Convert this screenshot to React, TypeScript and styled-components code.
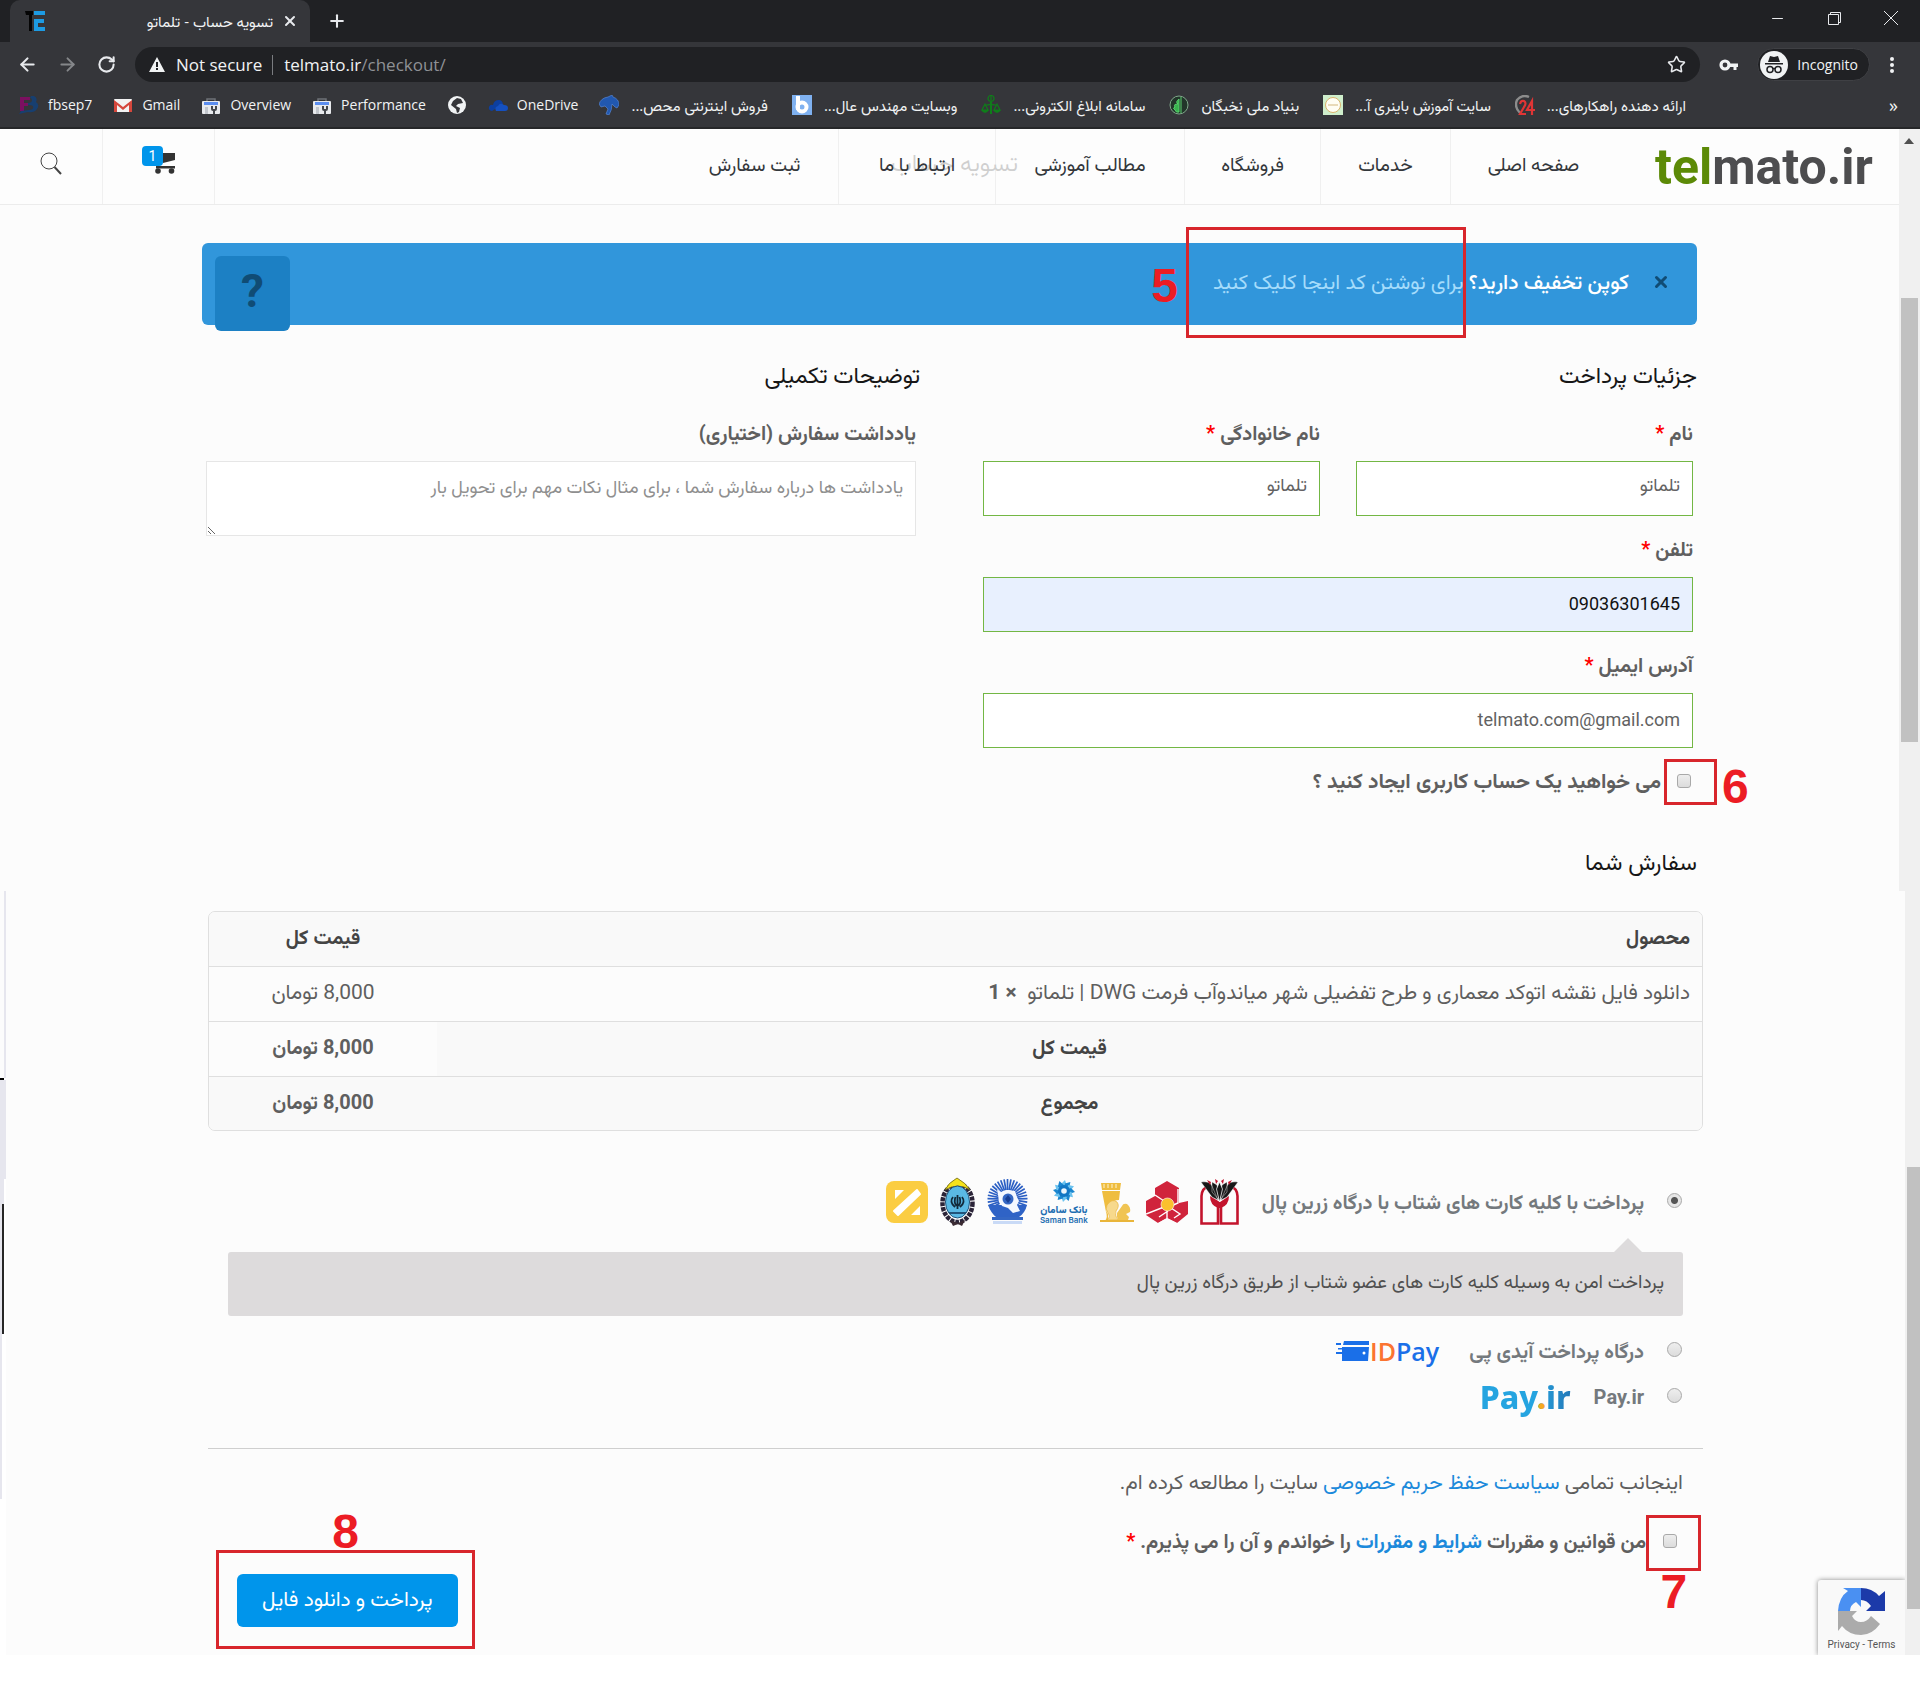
import React from "react";
import styled, { createGlobalStyle, css } from "styled-components";
import { ArrowLeft, ArrowRight, RotateCw, Star, X, Plus, Minus } from "lucide-react";

const faFont = `Roboto, Vazirmatn, "Noto Sans Arabic", "DejaVu Sans", sans-serif`;
const uiFont = `"Open Sans", Vazirmatn, "Noto Sans Arabic", "DejaVu Sans", sans-serif`;

const Global = createGlobalStyle`
  * { box-sizing: border-box; }
  body { margin: 0; background: #fff; }
  button, input, textarea { font: inherit; }
  a { text-decoration: none; color: inherit; }
`;

/* ---------- browser frame ---------- */

const Chrome = styled.header`
  background: #35363a;
  color: #f1f3f4;
  font-family: ${uiFont};
  border-bottom: 2px solid #262729;
`;
const TabStrip = styled.div`
  display: flex;
  align-items: center;
  height: 42px;
  padding: 0 21px 0 10px;
  background: #202124;
`;
const Tab = styled.div`
  display: flex;
  align-items: center;
  justify-content: space-between;
  align-self: stretch;
  width: 300px;
  padding: 0 12px 0 15px;
  background: #35363a;
  border-radius: 10px 10px 0 0;
  font-size: 15px;
  line-height: 22px;
`;
const TabTitle = styled.span`
  display: flex;
  align-items: center;
  gap: 9px;
`;
const IconButton = styled.button<{ $dim?: boolean }>`
  display: grid;
  place-items: center;
  padding: 0;
  border: 0;
  background: none;
  color: ${(p) => (p.$dim ? "#85878a" : "#e8eaed")};
`;
const NewTab = styled(IconButton)`
  margin-left: 17px;
`;
const WindowButtons = styled.div`
  display: flex;
  gap: 41px;
  margin-left: auto;
  padding-bottom: 6px;
`;
const Toolbar = styled.div`
  display: flex;
  align-items: center;
  gap: 19px;
  height: 45px;
  padding: 0 25px 0 17px;
`;
const Address = styled.div`
  display: flex;
  align-items: center;
  flex: 1;
  height: 35px;
  padding: 0 14px;
  border-radius: 18px;
  background: #202124;
  font-size: 17px;
  line-height: 24px;
`;
const Secure = styled.span`
  margin-left: 11px;
  padding-right: 10px;
  border-right: 1px solid #7a7c80;
  line-height: 20px;
`;
const Url = styled.span`
  flex: 1;
  margin-left: 11px;
`;
const Path = styled.span`
  color: #8f9195;
`;
const Profile = styled.button`
  display: flex;
  align-items: center;
  gap: 9px;
  height: 33px;
  padding: 0 11px 0 2px;
  border: 1px solid #3f4044;
  border-radius: 17px;
  background: #202124;
  color: #f1f3f4;
  font-size: 14px;
`;
const Bookmarks = styled.nav`
  display: flex;
  align-items: center;
  gap: 21px;
  height: 40px;
  padding: 0 22px 4px 19px;
  font-size: 14px;
  line-height: 22px;
`;
const Bookmark = styled.a<{ $fa?: boolean }>`
  display: flex;
  align-items: center;
  gap: 9px;
  white-space: nowrap;
  ${(p) =>
    p.$fa &&
    css`
      gap: 12px;
      padding-right: 3px;
      font-size: 15px;
    `}
`;
const More = styled.button`
  margin-left: auto;
  padding: 0;
  border: 0;
  background: none;
  color: #f1f3f4;
  font-size: 18px;
  line-height: 22px;
`;

/* ---------- scrolling panes ---------- */

const Pane = styled.div`
  display: flex;
  font-family: ${faFont};
  color: #5f5f5f;
  font-size: 20px;
  line-height: 30px;
`;
const View = styled.div`
  position: relative;
  flex: 1;
  min-width: 0;
  background: #fcfcfc;
`;
const Scroll = styled.div<{ $w: number; $rows: string }>`
  position: relative;
  display: grid;
  grid-template-rows: ${(p) => p.$rows};
  width: ${(p) => p.$w}px;
  padding-left: 2px;
  background: #f0f0f0;
`;
const Thumb = styled.div<{ $inset?: boolean }>`
  grid-row: 2;
  margin-right: ${(p) => (p.$inset ? 2 : 0)}px;
  background: #c1c1c1;
`;
const ScrollUp = styled.svg`
  position: absolute;
  top: 9px;
  left: 5px;
`;
const Container = styled.div`
  direction: rtl;
  max-width: 1495px;
  margin: 0 auto;
`;

/* ---------- site header ---------- */

const SiteHeader = styled.div`
  direction: rtl;
  display: flex;
  height: 76px;
  border-bottom: 1px solid #ececec;
  background: #fdfdfd;
`;
const Logo = styled.a`
  direction: ltr;
  width: 283px;
  padding-left: 39px;
  color: #4d4d4f;
  font-size: 50px;
  font-weight: 700;
  line-height: 77px;
`;
const LogoGreen = styled.span`
  color: #5c8a07;
`;
const NavCell = styled.a<{ $w: number; $last?: boolean }>`
  position: relative;
  display: grid;
  place-items: center;
  width: ${(p) => p.$w}px;
  padding-bottom: 4px;
  border-left: ${(p) => (p.$last ? 0 : 1)}px solid #f0f0f0;
  color: #33373b;
  font-size: 19px;
`;
const Tool = styled.button<{ $w: number }>`
  display: grid;
  place-items: center;
  width: ${(p) => p.$w}px;
  padding: 0 0 6px;
  border: 0;
  border-right: 1px solid #f0f0f0;
  background: none;
`;
const Spacer = styled.div`
  flex: 1;
`;
const Ghost = styled.h1`
  position: absolute;
  top: 16px;
  right: -23px;
  margin: 0;
  color: #cfcfcf;
  font-size: 24px;
  font-weight: 300;
  line-height: 36px;
  white-space: nowrap;
`;
const OverGhost = styled.span`
  position: relative;
`;
const CartIcon = styled.span`
  position: relative;
  display: block;
  margin: 4px 0 0 12px;
`;
const Badge = styled.span`
  position: absolute;
  top: -4px;
  left: -11px;
  width: 21px;
  border-radius: 4px;
  background: #0095eb;
  color: #fff;
  font-size: 14px;
  line-height: 20px;
`;

/* ---------- tutorial marks ---------- */

const Marked = styled.span`
  position: relative;
`;
const Frame = styled.span<{ $inset: string }>`
  position: absolute;
  inset: ${(p) => p.$inset};
  border: 3px solid #d8262c;
  pointer-events: none;
`;
const Digit = styled.span<{ $side: "left" | "right" | "top" | "bottom" }>`
  position: absolute;
  color: #ec1c24;
  font-family: "Liberation Sans", sans-serif;
  font-size: 48px;
  font-weight: 700;
  line-height: 36px;
  ${(p) =>
    ({
      left: css`right: calc(100% + 11px); top: calc(50% - 15px);`,
      right: css`left: calc(100% + 8px); top: calc(50% - 13px);`,
      top: css`bottom: calc(100% + 3px); left: calc(50% - 13px);`,
      bottom: css`top: calc(100% + 6px); left: calc(50% - 13px);`,
    })[p.$side]}
`;
function Mark({ n, inset, side }: { n: number; inset: string; side: "left" | "right" | "top" | "bottom" }) {
  return (
    <Frame $inset={inset}>
      <Digit $side={side}>{n}</Digit>
    </Frame>
  );
}

/* ---------- coupon ---------- */

const Alert = styled.div`
  display: flex;
  align-items: center;
  gap: 23px;
  height: 82px;
  margin-top: 38px;
  padding: 0 27px 4px 13px;
  border-radius: 6px;
  background: #3196db;
  color: #fff;
`;
const CloseAlert = styled.button`
  display: grid;
  padding: 0;
  border: 0;
  background: none;
  color: #104c75;
`;
const AlertText = styled.span`
  font-size: 21px;
  font-weight: 500;
`;
const CouponLink = styled.a`
  color: #a5dcfb;
  font-weight: 400;
`;
const AlertIcon = styled.span`
  align-self: flex-start;
  margin: 13px auto -7px 0;
  width: 75px;
  padding-bottom: 5px;
  border-radius: 6px;
  background: #1c80c4;
  color: #104c75;
  font-size: 46px;
  font-weight: 700;
  line-height: 70px;
  text-align: center;
`;

/* ---------- form ---------- */

const Columns = styled.div`
  display: grid;
  grid-template-columns: 1fr 1fr;
  gap: 59px;
  margin-top: 33px;
`;
const Title = styled.h3`
  margin: 0;
  color: #161616;
  font-size: 23px;
  font-weight: 400;
  line-height: 36px;
`;
const Fields = styled.div`
  display: grid;
  grid-template-columns: 1fr 1fr;
  gap: 18px 36px;
  padding: 0 4px;
  margin-top: 24px;
`;
const Field = styled.div<{ $wide?: boolean }>`
  display: flex;
  flex-direction: column;
  gap: 13px;
  ${(p) => p.$wide && css`grid-column: 1 / -1;`}
`;
const Label = styled.label<{ $large?: boolean }>`
  font-size: ${(p) => (p.$large ? 21 : 20)}px;
  font-weight: 700;
`;
const Req = styled.span`
  color: #f00;
`;
const Input = styled.input<{ $filled?: boolean }>`
  width: 100%;
  height: 55px;
  padding: 0 12px 3px;
  border: 1px solid #73b744;
  border-radius: 0;
  background: ${(p) => (p.$filled ? "#e8f0fe" : "#fff")};
  color: ${(p) => (p.$filled ? "#111" : "#626262")};
  font-size: 18px;
  text-align: right;
`;
const Area = styled.textarea`
  display: block;
  width: 100%;
  height: 75px;
  padding: 10px 12px;
  border: 1px solid #e6e6e6;
  background: #fff;
  font-size: 18px;
  line-height: 30px;
  &::placeholder {
    color: #8f8f8f;
  }
`;
const CheckRow = styled.div`
  display: flex;
  align-items: center;
  gap: 16px;
  padding-right: 2px;
`;
const BoxInput = styled.input`
  appearance: none;
  display: block;
  width: 14px;
  height: 14px;
  margin: 0;
  border: 1px solid #a9a9a9;
  border-radius: 3px;
  background: linear-gradient(#eee, #dcdcdc);
`;
const RadioInput = styled(BoxInput)`
  width: 15px;
  height: 15px;
  margin-bottom: 4px;
  border-radius: 50%;
  &:checked {
    background: radial-gradient(circle, #555 0 3px, #e6e6e6 4px);
  }
`;
const OrderTitle = styled(Title)`
  padding: 49px 0 10px;
`;

/* ---------- order table ---------- */

const Table = styled.table`
  width: 100%;
  border: 1px solid #dfdfdf;
  border-radius: 7px;
  border-spacing: 0;
  overflow: hidden;
  table-layout: fixed;
  margin-top: 20px;
`;
const cell = css`
  height: 55px;
  padding: 0 12px 4px;
  border-bottom: 1px solid #dfdfdf;
  tbody tr:last-child > & {
    height: 53px;
    border-bottom: 0;
  }
`;
const Th = styled.th<{ $start?: boolean; $price?: boolean }>`
  ${cell}
  ${(p) => p.$price && css`width: 228px;`}
  background: #f9f9f9;
  color: #444;
  text-align: ${(p) => (p.$start ? "right" : "center")};
`;
const Td = styled.td<{ $start?: boolean; $bold?: boolean; $tint?: boolean }>`
  ${cell}
  background: ${(p) => (p.$tint ? "#f9f9f9" : "#fcfcfc")};
  font-size: ${(p) => (p.$bold ? 20 : 21)}px;
  font-weight: ${(p) => (p.$bold ? 700 : 400)};
  text-align: ${(p) => (p.$start ? "right" : "center")};
`;

/* ---------- payment ---------- */

const Payment = styled.div`
  padding: 46px 20px 28px;
`;
const Method = styled.div<{ $h: number }>`
  display: flex;
  align-items: center;
  height: ${(p) => p.$h}px;
  padding-right: 1px;
`;
const MethodLabel = styled.label`
  margin: 0 23px 0 23px;
  color: #74797d;
  font-weight: 700;
`;
const Banks = styled.span`
  display: flex;
  align-items: center;
  gap: 12px;
`;
const MethodBox = styled.div`
  position: relative;
  margin: 25px 0 12px;
  padding: 15px 19px 19px;
  border-radius: 3px;
  background: #dddbdc;
  color: #505050;
  font-size: 19px;
  &::before {
    content: "";
    position: absolute;
    top: -14px;
    right: 41px;
    border: 14px solid transparent;
    border-top: 0;
    border-bottom-color: #dddbdc;
  }
`;
const IdPayLogo = styled.span`
  direction: ltr;
  display: flex;
  align-items: center;
  margin-right: 7px;
  color: #1a6fe8;
  font-family: "Open Sans", sans-serif;
  font-size: 25px;
  font-weight: 600;
`;
const Orange = styled.span`
  color: #fb7431;
`;
const PayIrLogo = styled.span`
  direction: ltr;
  background: linear-gradient(90deg, #25a4e0 60%, #2478b8);
  background-clip: text;
  color: transparent;
  font-family: "Noto Sans", sans-serif;
  font-size: 32px;
  font-weight: 800;
  line-height: 46px;
`;
const PayDot = styled.span`
  color: #f6a821;
`;
const Rule = styled.hr`
  margin: 28px -20px 18px;
  border: 0;
  border-top: 1px solid #cfcfcf;
`;
const Policy = styled.p`
  margin: 0 0 29px;
  font-size: 21px;
`;
const Link = styled.a`
  color: #1c8adb;
`;
const TermsRow = styled.div`
  display: flex;
  align-items: center;
  gap: 17px;
  padding-right: 6px;
`;
const Submit = styled.div`
  display: flex;
  justify-content: flex-end;
  margin: 18px 0 0 9px;
`;
const PayButton = styled.button`
  height: 53px;
  padding: 0 25px 4px;
  border: 0;
  border-radius: 6px;
  background: #0095eb;
  color: #fff;
  font-size: 21px;
`;
const Captcha = styled.div`
  position: absolute;
  right: 0;
  bottom: 0;
  display: grid;
  justify-items: center;
  width: 87px;
  height: 75px;
  padding-top: 8px;
  border-radius: 3px 0 0 0;
  background: #f9f9f9;
  box-shadow: 0 0 5px #888;
  clip-path: inset(-8px 0 0 -8px);
  color: #555;
  font-size: 10px;
  line-height: 14px;
`;

/* ---------- strip of the window behind ---------- */

const Edge = styled.div`
  width: 6px;
`;
const Strip = styled.div<{ $h: number; $bg?: string; $bar?: string; $w?: number }>`
  width: ${(p) => p.$w ?? 6}px;
  height: ${(p) => p.$h}px;
  background: ${(p) => p.$bg ?? "#fcfcfc"};
  ${(p) => p.$bar && css`border-right: 2px solid ${p.$bar};`}
`;

/* ---------- drawings ---------- */

const Fav = ({ children, w = 20 }: { children: React.ReactNode; w?: number }) => (
  <svg width={w} height="20" viewBox="0 0 20 20" aria-hidden="true">
    {children}
  </svg>
);
const TeIcon = () => (
  <Fav>
    <path d="M0 0h8v4H7v16H4V4H1z" fill="#050505" />
    <path d="M9 0h11v4H9zM9 8h10v4H13v4h7v4H9z" fill="#1d9be3" />
  </Fav>
);
const FbIcon = () => (
  <Fav>
    <path d="M1 2h10v3H5v3h4v3H5v5H1z" fill="#7c1060" />
    <path d="M12 1h3q4 2 2 6 4 3 1 7-3 4-9 3l-5 1-4 1 2-3 8-1q5 0 4-4-1-1-5-1V8q4 0 4-3 0-2-2-2z" fill="#173f70" />
  </Fav>
);
const GmailIcon = () => (
  <Fav>
    <rect x="1" y="4" width="18" height="13" rx="1" fill="#f2f2f2" />
    <path d="M1 17V5l9 7 9-7v12h-3V10l-6 5-6-5v7z" fill="#d5473c" />
  </Fav>
);
const ConsoleIcon = () => (
  <Fav>
    <path d="M6 6V4h8v2" fill="none" stroke="#6d7177" strokeWidth="1.500" />
    <rect x="1" y="6" width="18" height="13" rx="1" fill="#e8eaed" />
    <path d="M3 7h14v3H3z" fill="#5b8def" />
    <path d="M4 12h3v7H4z" fill="#c2c6cc" />
    <path d="M10 11v3q0 2 2 2v3h2v-3q2 0 2-2v-3h-2v3h-2v-3z" fill="#44474c" />
  </Fav>
);
const GlobeIcon = () => (
  <Fav>
    <circle cx="10" cy="10" r="9" fill="#f1f3f4" />
    <path d="M10 3l4 1 2 4-5 1-2 2 4 2-1 4-2 1-1-4-5-4 2-4z" fill="#35363a" />
  </Fav>
);
const CloudIcon = () => (
  <Fav>
    <path d="M4 16q-4-1-3-4 1-3 4-2 1-5 6-5 3 0 4 4" fill="#0d3f9f" />
    <path d="M8 16q-2-4 2-5 2-4 6-1 4 0 4 3t-3 3z" fill="#1550c0" />
  </Fav>
);
const HorseIcon = () => (
  <Fav>
    <path d="M0 9q2-6 9-7l4-2 1 2q6 2 6 8l-2 3-2-1-3-3q0 6-3 11l-3-1 2-5-3-3-4 1z" fill="#2158b0" stroke="#5c8ee0" strokeWidth=".6" />
  </Fav>
);
const BIcon = () => (
  <Fav>
    <rect width="20" height="20" fill="#7fb1f0" />
    <path d="M6 1v14" stroke="#fff" strokeWidth="4" />
    <circle cx="10" cy="12" r="4.5" fill="none" stroke="#fff" strokeWidth="4" />
  </Fav>
);
const ScalesIcon = () => (
  <Fav>
    <g fill="none" stroke="#0f7d1a" strokeWidth="1.200">
      <ellipse cx="10" cy="3.500" rx="3" ry="3" />
      <path d="M10 1v5M5 10q5 0 5-2 0 2 5 2M4 9l-3 6h6zM16 9l-3 6h6z" />
      <path d="M10 7v12" strokeWidth="2" />
    </g>
    <path d="M0 15h8q-4 6-8 0M12 15h8q-4 6-8 0" fill="#0f7d1a" />
  </Fav>
);
const LeafIcon = () => (
  <Fav>
    <circle cx="10" cy="10" r="9" fill="#22352a" stroke="#7fa98a" />
    <path d="M12 2v16M10 4q-4 3-1 5-5 0-3 3-3 1 0 3 1 3 4 2z" fill="#37b24d" stroke="#58d06d" />
  </Fav>
);
const SealIcon = () => (
  <Fav>
    <rect width="20" height="20" fill="#cfeecb" />
    <circle cx="10" cy="10" r="7.5" fill="#fffef4" stroke="#d9b36b" />
    <path d="M5 10h10" stroke="#e2cfa6" strokeWidth="1.500" />
  </Fav>
);
const Icon24 = () => (
  <Fav>
    <path d="M14 2Q7-1 2 5q-3 7 3 13" fill="none" stroke="#8c8c8c" strokeWidth="2.400" />
    <path d="M5 9q1-4 4-3 3 2 0 6l-4 7h6M17 20V6l-5 9h8" fill="none" stroke="#e03535" strokeWidth="2.200" />
  </Fav>
);
const WarnIcon = () => (
  <svg width="16" height="15" viewBox="0 0 16 15" aria-hidden="true">
    <path d="M8 0l8 15H0z" fill="#f1f3f4" />
    <path d="M7 5h2v5H7zM7 11h2v2H7z" fill="#202124" />
  </svg>
);
const KeyIcon = () => (
  <svg width="19" height="12" viewBox="0 0 19 12" aria-label="Passwords">
    <circle cx="6" cy="6" r="4" fill="none" stroke="#f1f3f4" strokeWidth="3.2" />
    <path d="M10 4.500h9v3.500h-1.500v3h-3v-3H10z" fill="#f1f3f4" />
  </svg>
);
const SpyIcon = () => (
  <svg width="28" height="28" viewBox="0 0 28 28" aria-hidden="true">
    <circle cx="14" cy="14" r="14" fill="#f1f3f4" />
    <path d="M10 5l4 1 4-1 2 6H8zM5 12h18v1.500H5z" fill="#202124" />
    <g fill="none" stroke="#202124" strokeWidth="1.500">
      <circle cx="10" cy="18.500" r="3" />
      <circle cx="18" cy="18.500" r="3" />
      <path d="M13 18q1-1 2 0" />
    </g>
  </svg>
);
const Dots = () => (
  <svg width="6" height="18" viewBox="0 0 6 18" aria-label="Menu" fill="#f1f3f4">
    <circle cx="3" cy="3" r="2" />
    <circle cx="3" cy="9" r="2" />
    <circle cx="3" cy="15" r="2" />
  </svg>
);
const SearchIcon = () => (
  <svg width="24" height="24" viewBox="0 0 24 24" aria-label="جستجو" fill="none" stroke="#444">
    <circle cx="10" cy="9" r="8" />
    <path d="M15.500 15l6.500 7" strokeWidth="2" />
  </svg>
);
const Cart = () => (
  <svg width="23" height="24" viewBox="0 0 23 24" aria-hidden="true" fill="#333">
    <path d="M8 3h14v7l-12 3zM3 16h19v2.500H3z" />
    <circle cx="5" cy="21" r="2.800" />
    <circle cx="18.500" cy="21" r="2.800" />
  </svg>
);

const Zarinpal = () => (
  <svg width="42" height="42" viewBox="0 0 42 42" aria-label="ZarinPal">
    <rect width="42" height="42" rx="8" fill="#fbcd42" />
    <path d="M31 9l3 4-22 21-4-4z" fill="#fff" stroke="#fff" strokeWidth="2" strokeLinejoin="round" />
    <path d="M9 9h9l-9 9zM34 34h-9l9-9z" fill="#fff" />
  </svg>
);
const Melli = () => (
  <svg width="35" height="50" viewBox="0 0 35 50" aria-label="Bank Melli">
    <ellipse cx="17.500" cy="26" rx="15" ry="19" fill="none" stroke="#2b2438" strokeWidth="4.500" strokeDasharray="4 1" />
    <path d="M5 13Q8 6 17 1q9 5 13 12-12-8-25 0z" fill="#f5e21c" stroke="#6b641b" strokeWidth=".8" />
    <ellipse cx="17.500" cy="25" rx="12" ry="16" fill="#5ab9e4" stroke="#21547a" />
    <path d="M17.500 18v14M13 20q-4 5 2 10M22 20q4 5-2 10M15.500 20q-2 5 1 9M19.500 20q2 5-1 9" fill="none" stroke="#122a3a" strokeWidth="1.800" />
    <path d="M9 36h17" stroke="#21547a" strokeWidth="2" />
    <path d="M10 43l8 3 7-3-3 6-4-2-5 2z" fill="#3b2b33" />
  </svg>
);
const Saderat = () => (
  <svg width="41" height="48" viewBox="0 0 41 48" aria-label="Bank Saderat">
    <g stroke="#2b5fc4" strokeWidth="1.700">
      {Array.from({ length: 25 }, (_, i) => {
        const a = Math.PI * (0.84 + (i * 1.32) / 24);
        return <path key={i} d={`M${20.5 + 9 * Math.cos(a)} ${21 + 9 * Math.sin(a)}L${20.5 + 20 * Math.cos(a)} ${21 + 20 * Math.sin(a)}`} />;
      })}
    </g>
    <path d="M1 27q3 8 8 12h23q6-4 8-12z" fill="#2f63c6" />
    <path d="M10 11l4 3 7-2 7 1 2 6 2 4-2 4 3 6-7 2-5-5-6-2-3-7-1-4z" fill="#f4f8ff" />
    <circle cx="21" cy="21" r="5.500" fill="#3467c4" />
    <path d="M18 21l3-4 3 4-3 4z" fill="#173e93" />
    <path d="M5 39h31v3H5z" fill="#3467c4" />
    <path d="M6 43h29v3H6z" fill="#c9daf6" />
  </svg>
);
const SamanWrap = styled.span`
  display: grid;
  justify-items: center;
  width: 48px;
  color: #1f6fb2;
`;
const SamanFa = styled.span`
  font-size: 10px;
  font-weight: 900;
  line-height: 12px;
  white-space: nowrap;
`;
const SamanEn = styled.span`
  font-family: Inter, sans-serif;
  font-size: 8px;
  font-weight: 600;
  line-height: 9px;
  white-space: nowrap;
`;
const Saman = () => (
  <SamanWrap>
    <svg width="24" height="25" viewBox="0 0 24 25" aria-hidden="true">
      {Array.from({ length: 12 }, (_, i) => (
        <path key={i} d="M12 12l-3-7 4-4 2 6z" fill={i % 2 ? "#1a86cf" : "#6cc3ef"} transform={`rotate(${i * 30} 12 12)`} />
      ))}
      <circle cx="12" cy="12" r="6" fill="#1277c4" />
      <circle cx="12" cy="12" r="2.800" fill="#eaf6fd" />
    </svg>
    <SamanFa>بانک سامان</SamanFa>
    <SamanEn>Saman Bank</SamanEn>
  </SamanWrap>
);
const Pasargad = () => (
  <svg width="34" height="41" viewBox="0 0 34 41" aria-label="Bank Pasargad">
    <path d="M1 1h20l-1 7H2zM2 9h18l-1 9q-5 0-10 4-5 5-1 10v7H5q3-4 1-9z" fill="#efbd3f" />
    <path d="M4 2v4M8 2v4M12 2v4M16 2v4" stroke="#fdf3d4" />
    <path d="M7 23q5-7 10-3 3 4-1 9-2 4 2 9H7q4-3 1-7-3-4-1-8z" fill="#f7d98c" stroke="#e9b53a" strokeWidth=".7" />
    <path d="M17 31l5-7q1-3 5-2 4 3 3 8l-4 2 3 3-1 3H18q-2-4-1-7z" fill="#f0c453" />
    <path d="M0 38h34v2H0z" fill="#e9b53a" />
  </svg>
);
const Mellat = () => (
  <svg width="42" height="42" viewBox="0 0 42 42" aria-label="Bank Maskan">
    <path d="M21 0l12 7v15l9-2v13l-11 9-10-5-9 5-12-8V20l9-5V7z" fill="#d0243c" />
    <path d="M9 14l12 8M32 8v14l-7 3M0 33l18-7M21 29v8M25 27l9 6-6 4M13 36l9-6" fill="none" stroke="#fff" strokeWidth="1.400" />
    <path d="M12 42l9-5 10 5z" fill="#fcfcfc" />
    <circle cx="21.500" cy="23.500" r="6.500" fill="#fbc02d" stroke="#fff" strokeWidth=".6" />
  </svg>
);
const Tulips = () => (
  <svg width="39" height="46" viewBox="0 0 39 46" aria-label="Bank Eghtesad Novin">
    <path d="M8 8Q2 9 1.500 17v27.500H18V26M31 8q6 1 6.500 9v27.500H21V26" fill="none" stroke="#c3142d" strokeWidth="2.600" />
    <path d="M10 17q0 9 8 12h3q8-3 8-12l-9 6z" fill="#c3142d" />
    <path d="M1 3q9-1 11 4l6 14-6-3zM38 3q-9-1-11 4l-6 14 6-3zM12 3l5 3 2 15-7-8zM27 3l-5 3-2 15 7-8z" fill="#171717" stroke="#fff" strokeWidth=".4" />
    <path d="M19.500 3l3 7-3 13-3-13z" fill="#171717" stroke="#fff" strokeWidth=".7" />
    <path d="M7 1l4 2-1 3zM32 1l-4 2 1 3zM15 0l3 2-2 3zM24 0l-3 2 2 3z" fill="#c3142d" />
  </svg>
);
const IdCard = () => (
  <svg width="34" height="20" viewBox="0 0 34 20" aria-hidden="true" fill="#1a6fe8">
    <path d="M8 0h25v4H7zM0 2h5v2H0zM6 6h27l-1 14H6zM0 11h9v2H0zM2 7h6v1.500H2z" />
    <circle cx="28" cy="12" r="1.500" fill="#fff" />
  </svg>
);
const RecaptchaLogo = () => (
  <svg width="47" height="47" viewBox="0 0 47 47" aria-hidden="true">
    <path d="M0 23Q1 9 10 3L5 0h18v19l-5-5q-6 3-6 9z" fill="#4a90f2" />
    <path d="M23 0q11 0 18 8l6-5v20H28l5-5q-4-6-10-6z" fill="#1c3aa9" />
    <path d="M0 23h19l-5 5q3 6 9 6t10-6l9 8q-8 11-19 11-12 0-19-9l-4 5z" fill="#ababab" />
  </svg>
);

const bookmarks: { icon: React.ReactNode; text?: string; fa?: boolean }[] = [
  { icon: <FbIcon />, text: "fbsep7" },
  { icon: <GmailIcon />, text: "Gmail" },
  { icon: <ConsoleIcon />, text: "Overview" },
  { icon: <ConsoleIcon />, text: "Performance" },
  { icon: <GlobeIcon /> },
  { icon: <CloudIcon />, text: "OneDrive" },
  { icon: <HorseIcon />, text: "فروش اینترنتی محص...", fa: true },
  { icon: <BIcon />, text: "وبسایت مهندس عال...", fa: true },
  { icon: <ScalesIcon />, text: "سامانه ابلاغ الکترونی...", fa: true },
  { icon: <LeafIcon />, text: "بنیاد ملی نخبگان", fa: true },
  { icon: <SealIcon />, text: "سایت آموزش باینری آ...", fa: true },
  { icon: <Icon24 />, text: "ارائه دهنده راهکارهای...", fa: true },
];

export default function App() {
  return (
    <>
      <Global />
      <Chrome>
        <TabStrip>
          <Tab>
            <TeIcon />
            <TabTitle>
              <span dir="rtl">تسویه حساب - تلماتو</span>
              <IconButton aria-label="Close tab"><X size={16} strokeWidth={3} /></IconButton>
            </TabTitle>
          </Tab>
          <NewTab aria-label="New tab"><Plus size={20} strokeWidth={2.5} /></NewTab>
          <WindowButtons>
            <IconButton aria-label="Minimize"><Minus size={17} strokeWidth={1.5} /></IconButton>
            <IconButton aria-label="Restore">
              <svg width="15" height="15" viewBox="0 0 15 15" fill="none" stroke="currentColor" aria-hidden="true">
                <path d="M1.500 3.500h10v10h-10zM3.500 3.500v-2h10v10h-2" />
              </svg>
            </IconButton>
            <IconButton aria-label="Close">
              <svg width="16" height="14" viewBox="0 0 16 14" stroke="currentColor" aria-hidden="true">
                <path d="M1 0l14 14M15 0L1 14" />
              </svg>
            </IconButton>
          </WindowButtons>
        </TabStrip>
        <Toolbar>
          <IconButton aria-label="Back"><ArrowLeft size={21} strokeWidth={2.4} /></IconButton>
          <IconButton aria-label="Forward" $dim><ArrowRight size={21} strokeWidth={2.2} /></IconButton>
          <IconButton aria-label="Reload"><RotateCw size={19} strokeWidth={2.6} /></IconButton>
          <Address>
            <WarnIcon />
            <Secure>Not secure</Secure>
            <Url>telmato.ir<Path>/checkout/</Path></Url>
            <IconButton aria-label="Bookmark"><Star size={19} strokeWidth={2} /></IconButton>
          </Address>
          <KeyIcon />
          <Profile><SpyIcon />Incognito</Profile>
          <Dots />
        </Toolbar>
        <Bookmarks>
          {bookmarks.map((b, i) => (
            <Bookmark key={i} href="#" $fa={b.fa}>
              {b.icon}
              {b.text && <span dir={b.fa ? "rtl" : "ltr"}>{b.text}</span>}
            </Bookmark>
          ))}
          <More aria-label="More bookmarks">»</More>
        </Bookmarks>
      </Chrome>

      <Pane>
        <View>
          <SiteHeader>
            <Logo href="#"><LogoGreen>tel</LogoGreen>mato.ir</Logo>
            <NavCell href="#" $w={166}>صفحه اصلی</NavCell>
            <NavCell href="#" $w={130}>خدمات</NavCell>
            <NavCell href="#" $w={136}>فروشگاه</NavCell>
            <NavCell href="#" $w={189}>مطالب آموزشی</NavCell>
            <NavCell href="#" $w={157}>
              <Ghost>تسویه حساب</Ghost>
              <OverGhost>ارتباط با ما</OverGhost>
            </NavCell>
            <NavCell href="#" $w={167} $last>ثبت سفارش</NavCell>
            <Spacer />
            <Tool $w={112} aria-label="سبد خرید">
              <CartIcon>
                <Cart />
                <Badge>1</Badge>
              </CartIcon>
            </Tool>
            <Tool $w={103}><SearchIcon /></Tool>
          </SiteHeader>

          <Container>
            <Alert>
              <CloseAlert aria-label="بستن"><X size={18} strokeWidth={4} /></CloseAlert>
              <AlertText>
                کوپن تخفیف دارید؟{" "}
                <Marked>
                  <CouponLink href="#">برای نوشتن کد اینجا کلیک کنید</CouponLink>
                  <Mark n={5} inset="-43px -3px -44px -27px" side="left" />
                </Marked>
              </AlertText>
              <AlertIcon>?</AlertIcon>
            </Alert>

            <Columns>
              <div>
                <Title>جزئیات پرداخت</Title>
                <Fields>
                  <Field>
                    <Label htmlFor="first">نام <Req>*</Req></Label>
                    <Input id="first" defaultValue="تلماتو" />
                  </Field>
                  <Field>
                    <Label htmlFor="last">نام خانوادگی <Req>*</Req></Label>
                    <Input id="last" defaultValue="تلماتو" />
                  </Field>
                  <Field $wide>
                    <Label htmlFor="phone">تلفن <Req>*</Req></Label>
                    <Input id="phone" $filled defaultValue="09036301645" />
                  </Field>
                  <Field $wide>
                    <Label htmlFor="email">آدرس ایمیل <Req>*</Req></Label>
                    <Input id="email" defaultValue="telmato.com@gmail.com" />
                  </Field>
                  <Field $wide>
                    <CheckRow>
                      <Marked>
                        <BoxInput type="checkbox" id="account" />
                        <Mark n={6} inset="-15px -26px -17px -13px" side="right" />
                      </Marked>
                      <Label htmlFor="account" $large>می خواهید یک حساب کاربری ایجاد کنید ؟</Label>
                    </CheckRow>
                  </Field>
                </Fields>
              </div>
              <div>
                <Title>توضیحات تکمیلی</Title>
                <Fields>
                  <Field $wide>
                    <Label htmlFor="notes">یادداشت سفارش (اختیاری)</Label>
                    <Area id="notes" placeholder="یادداشت ها درباره سفارش شما ، برای مثال نکات مهم برای تحویل بار" />
                  </Field>
                </Fields>
              </div>
            </Columns>
            <OrderTitle>سفارش شما</OrderTitle>
          </Container>
        </View>
        <Scroll $w={21} $rows="169fr 444fr 149fr">
          <ScrollUp width="10" height="6" viewBox="0 0 10 6" aria-hidden="true"><path d="M0 6l5-6 5 6z" fill="#505050" /></ScrollUp>
          <Thumb $inset />
        </Scroll>
      </Pane>

      <Pane>
        <Edge>
          <Strip $h={187} $bar="#e6e6ee" />
          <Strip $h={2} $bg="#000" $w={4} />
          <Strip $h={99} $bg="#e6e6ee" />
          <Strip $h={25} $bg="#e6e6ee" $w={4} />
          <Strip $h={130} $bg="#e6e6ee" $bar="#262626" $w={4} />
          <Strip $h={165} $bg="#e6e6ee" $w={2} />
        </Edge>
        <View>
          <Container>
            <Table>
              <thead>
                <tr>
                  <Th $start scope="col">محصول</Th>
                  <Th $price scope="col">قیمت کل</Th>
                </tr>
              </thead>
              <tbody>
                <tr>
                  <Td $start>دانلود فایل نقشه اتوکد معماری و طرح تفضیلی شهر میاندوآب فرمت DWG | تلماتو&nbsp; <strong>× 1</strong></Td>
                  <Td>8,000 تومان</Td>
                </tr>
                <tr>
                  <Th scope="row">قیمت کل</Th>
                  <Td $bold>8,000 تومان</Td>
                </tr>
                <tr>
                  <Th scope="row">مجموع</Th>
                  <Td $bold $tint>8,000 تومان</Td>
                </tr>
              </tbody>
            </Table>

            <Payment>
              <Method $h={50}>
                <RadioInput type="radio" name="pay" id="zarin" defaultChecked />
                <MethodLabel htmlFor="zarin">پرداخت با کلیه کارت های شتاب با درگاه زرین پال</MethodLabel>
                <Banks>
                  <Tulips />
                  <Mellat />
                  <Pasargad />
                  <Saman />
                  <Saderat />
                  <Melli />
                  <Zarinpal />
                </Banks>
              </Method>
              <MethodBox>پرداخت امن به وسیله کلیه کارت های عضو شتاب از طریق درگاه زرین پال</MethodBox>
              <Method $h={46}>
                <RadioInput type="radio" name="pay" id="idpay" />
                <MethodLabel htmlFor="idpay">درگاه پرداخت آیدی پی</MethodLabel>
                <IdPayLogo><IdCard /><Orange>ID</Orange>Pay</IdPayLogo>
              </Method>
              <Method $h={46}>
                <RadioInput type="radio" name="pay" id="payir" />
                <MethodLabel htmlFor="payir">Pay.ir</MethodLabel>
                <PayIrLogo>Pay<PayDot>.</PayDot>ir</PayIrLogo>
              </Method>
              <Rule />
              <Policy>
                اینجانب تمامی <Link href="#">سیاست حفظ حریم خصوصی</Link> سایت را مطالعه کرده ام.
              </Policy>
              <TermsRow>
                <Marked>
                  <BoxInput type="checkbox" id="terms" />
                  <Mark n={7} inset="-19px -24px -23px -17px" side="bottom" />
                </Marked>
                <Label htmlFor="terms">
                  من قوانین و مقررات <Link href="#">شرایط و مقررات</Link> را خواندم و آن را می پذیرم. <Req>*</Req>
                </Label>
              </TermsRow>
              <Submit>
                <Marked>
                  <PayButton>پرداخت و دانلود فایل</PayButton>
                  <Mark n={8} inset="-24px -17px -22px -21px" side="top" />
                </Marked>
              </Submit>
            </Payment>
          </Container>
          <Captcha>
            <RecaptchaLogo />
            <span>Privacy - Terms</span>
          </Captcha>
        </View>
        <Scroll $w={15} $rows="277fr 444fr 46fr">
          <Thumb />
        </Scroll>
      </Pane>
    </>
  );
}
